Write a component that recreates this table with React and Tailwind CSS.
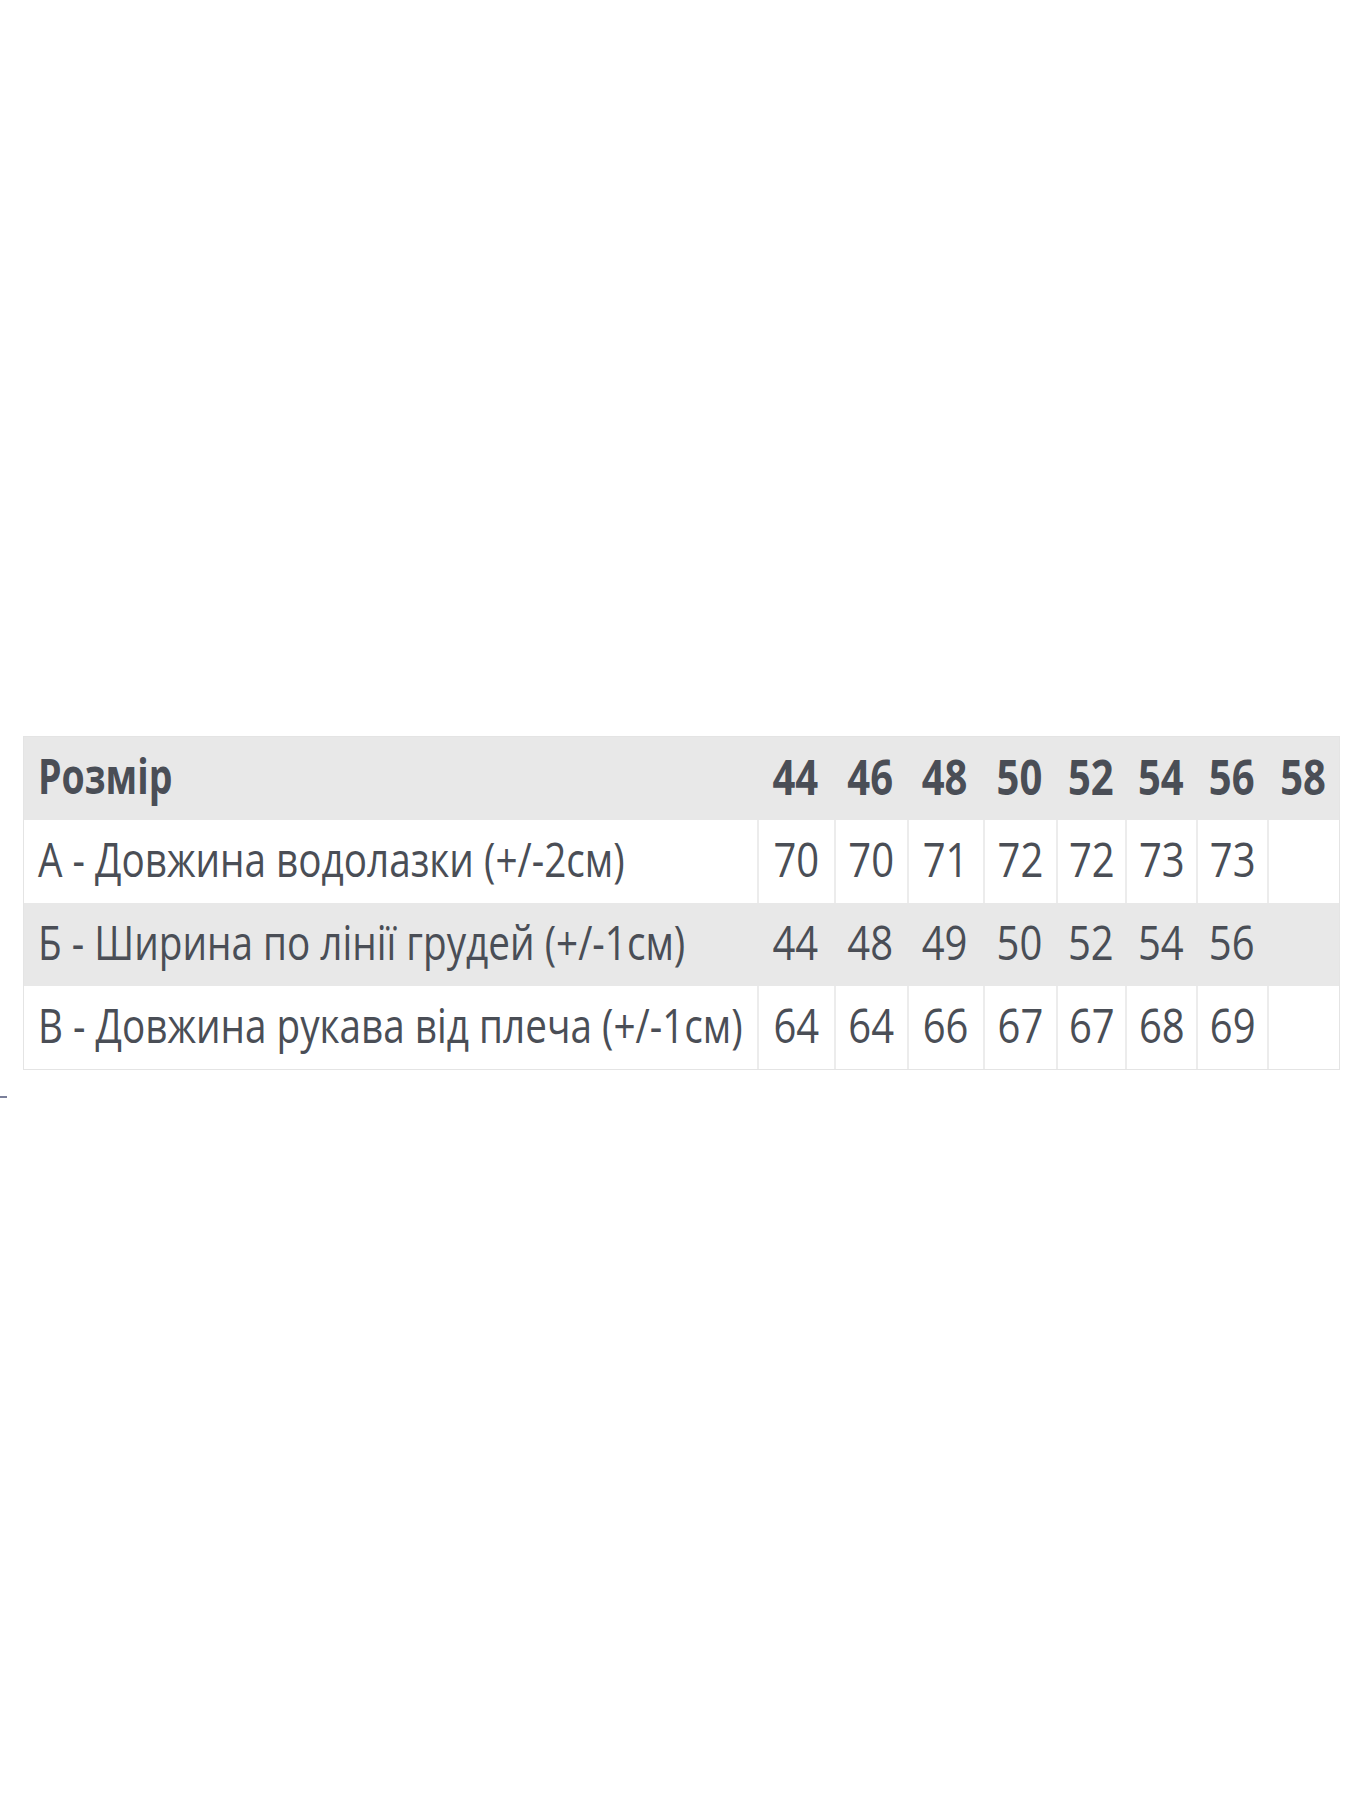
import React from "react";

const sizes = ["44", "46", "48", "50", "52", "54", "56", "58"];

const rows = [
  { label: "А - Довжина водолазки (+/-2см)", values: ["70", "70", "71", "72", "72", "73", "73", ""], gray: false },
  { label: "Б - Ширина по лінії грудей (+/-1см)", values: ["44", "48", "49", "50", "52", "54", "56", ""], gray: true },
  { label: "В - Довжина рукава від плеча (+/-1см)", values: ["64", "64", "66", "67", "67", "68", "69", ""], gray: false },
];

const colW = ["w-[77px]", "w-[73px]", "w-[76px]", "w-[74px]", "w-[69px]", "w-[71px]", "w-[71px]", "w-[72px]"];

const App = () => {
  return (
    <div className="w-[1350px] h-[1800px] bg-white font-['Open_Sans',sans-serif] text-[#4a4e56]">
      <div className="h-[736px]" />
      <div className="ml-[23px] w-[1317px] border border-[#e4e4e4]">
        <div className="flex h-[83px] bg-[#e8e8e8] items-center">
          <div className="w-[734px] pl-[14px] text-[37.5px] font-bold">
            <span className="inline-block scale-y-[1.27] -translate-y-[2px]">Розмір</span>
          </div>
          {sizes.map((s, i) => (
            <div key={s} className={`${colW[i]} text-center text-[40px] font-bold`}>
              <span className="inline-block scale-y-[1.2] -translate-y-[2px]">{s}</span>
            </div>
          ))}
        </div>
        {rows.map((r) => (
          <div key={r.label} className={`flex h-[83px] ${r.gray ? "bg-[#e8e8e8]" : "bg-white"}`}>
            <div className="w-[734px] pl-[14px] flex items-center text-[38.7px]">
              <span className="inline-block scale-y-[1.24] -translate-y-[3px] whitespace-nowrap">{r.label}</span>
            </div>
            {r.values.map((v, i) => (
              <div
                key={i}
                className={`${colW[i]} flex items-center justify-center text-[40px] ${r.gray ? "" : "border-l-2 border-[#ececec]"}`}
              >
                <span className="inline-block scale-y-[1.2] -translate-y-[3px]">{v}</span>
              </div>
            ))}
          </div>
        ))}
      </div>
      <div className="mt-[26px] w-[7px] h-[2px] bg-[#7a7f9a]" />
    </div>
  );
};

export default App;
